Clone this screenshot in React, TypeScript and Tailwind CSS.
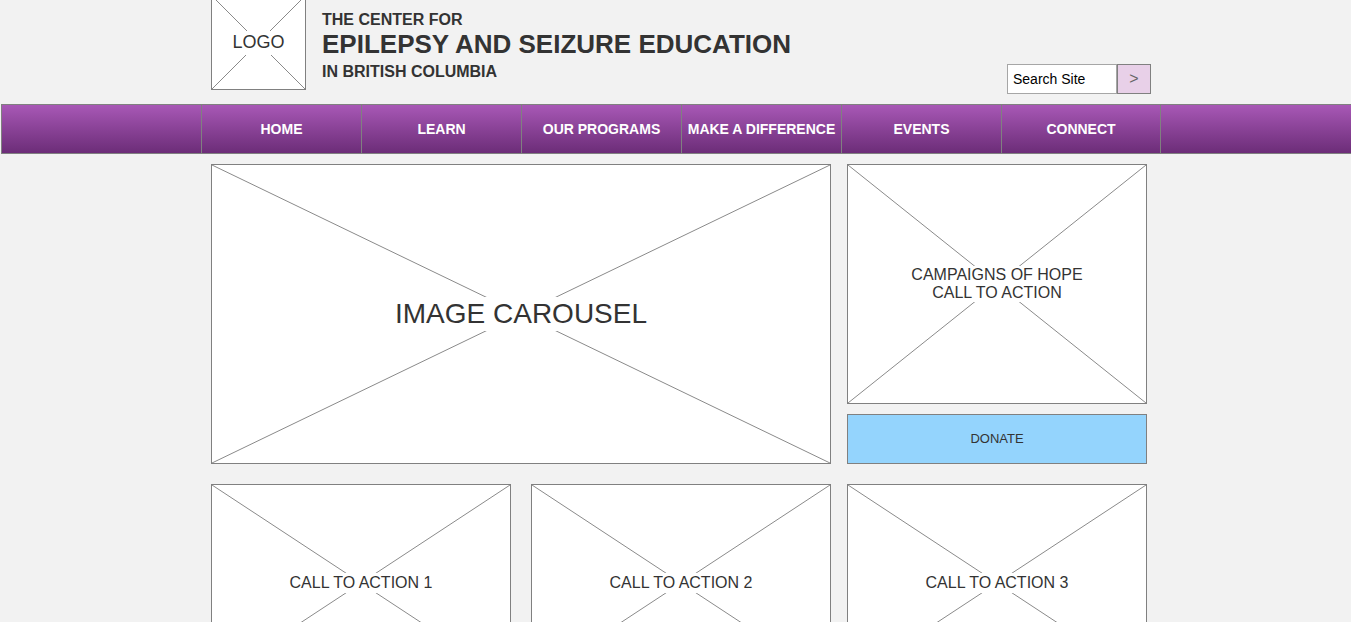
import type { ReactNode } from "react";

const NAV = ["HOME", "LEARN", "OUR PROGRAMS", "MAKE A DIFFERENCE", "EVENTS", "CONNECT"];

function Crossed({
  className,
  children,
  bg = "bg-white",
}: {
  className: string;
  children?: ReactNode;
  bg?: string;
}) {
  return (
    <div className={`relative border border-[#808080] bg-white flex items-center justify-center ${className}`}>
      {/* placeholder cross */}
      <svg className="absolute inset-0 w-full h-full" viewBox="0 0 100 100" preserveAspectRatio="none">
        <line x1="0" y1="0" x2="100" y2="100" stroke="#8a8a8a" strokeWidth="1" vectorEffect="non-scaling-stroke" />
        <line x1="100" y1="0" x2="0" y2="100" stroke="#8a8a8a" strokeWidth="1" vectorEffect="non-scaling-stroke" />
      </svg>
      {children && <div className={`relative ${bg} text-center text-[#333]`}>{children}</div>}
    </div>
  );
}

export default function App() {
  return (
    <div className="h-[622px] overflow-hidden bg-[#f2f2f2] font-['Liberation_Sans',Arial,sans-serif]">
      {/* Header */}
      <header className="h-[104px] w-[960px] ml-[201px] flex">
        <Crossed className="w-[95px] h-[95px] -mt-[5px] ml-[10px] shrink-0">
          <span className="block px-1 mb-[2px] text-[18px] leading-[22px]">LOGO</span>
        </Crossed>
        <div className="ml-[16px] pt-[10px] font-bold text-[#333]">
          <div className="text-[16px] leading-[20px]">THE CENTER FOR</div>
          <div className="text-[26px] leading-[28px]">EPILEPSY AND SEIZURE EDUCATION</div>
          <div className="text-[16px] leading-[20px] mt-[4px]">IN BRITISH COLUMBIA</div>
        </div>
        <div className="ml-auto mr-[10px] mb-[10px] self-end flex">
          <div className="w-[110px] h-[30px] border border-[#a6a6a6] bg-white flex items-center px-[5px] text-[14px] text-black">
            Search Site
          </div>
          <button className="w-[34px] h-[30px] border border-[#808080] bg-[#e8d0e8] text-[16px] text-[#666] flex items-center justify-center">
            &gt;
          </button>
        </div>
      </header>

      {/* Nav */}
      <nav className="h-[50px] ml-[1px] border-y border-l border-[#808080] bg-gradient-to-b from-[#a858b6] to-[#6c2d78]">
        <div className="ml-[199px] flex h-full">
          {NAV.map((n, i) => (
            <div
              key={n}
              className={`w-[160px] h-full border-l border-[#808080] flex items-center justify-center text-white font-bold text-[14px] ${
                i === NAV.length - 1 ? "border-r" : ""
              }`}
            >
              {n}
            </div>
          ))}
        </div>
      </nav>

      {/* Content */}
      <main className="ml-[211px] mt-[10px] flex flex-col gap-[20px]">
        <div className="flex gap-[16px]">
          <Crossed className="w-[620px] h-[300px]">
            <span className="block px-1 text-[28px] leading-[34px]">IMAGE CAROUSEL</span>
          </Crossed>
          <div className="w-[300px] flex flex-col gap-[10px]">
            <Crossed className="h-[240px]">
              <div className="px-1 text-[16px] leading-[18px]">
                CAMPAIGNS OF HOPE
                <br />
                CALL TO ACTION
              </div>
            </Crossed>
            <div className="h-[50px] border border-[#808080] bg-[#94d4fd] flex items-center justify-center text-[13px] text-[#333]">
              DONATE
            </div>
          </div>
        </div>
        <div className="flex gap-[16px]">
          <div className="w-[620px] flex gap-[20px]">
            <Crossed className="w-[300px] h-[198px]">
              <span className="block px-1 text-[16px] leading-[20px]">CALL TO ACTION 1</span>
            </Crossed>
            <Crossed className="w-[300px] h-[198px]">
              <span className="block px-1 text-[16px] leading-[20px]">CALL TO ACTION 2</span>
            </Crossed>
          </div>
          <Crossed className="w-[300px] h-[198px]">
            <span className="block px-1 text-[16px] leading-[20px]">CALL TO ACTION 3</span>
          </Crossed>
        </div>
      </main>
    </div>
  );
}
